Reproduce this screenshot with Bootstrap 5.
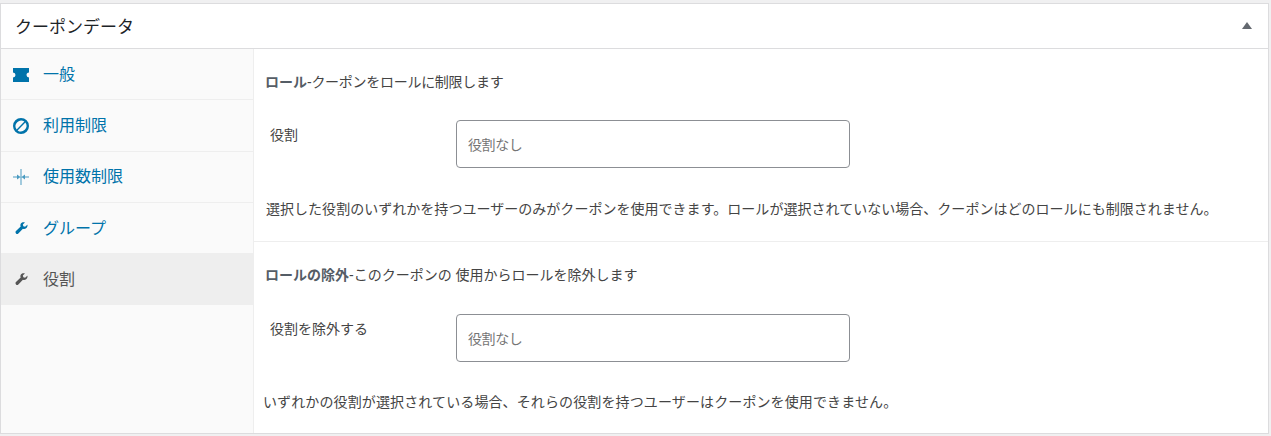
<!DOCTYPE html>
<html lang="ja">
<head>
<meta charset="utf-8">
<title>クーポンデータ</title>
<link rel="stylesheet" href="https://cdn.jsdelivr.net/npm/bootstrap@5.3.0/dist/css/bootstrap.min.css">
<style>
html,body{height:436px;overflow:hidden}
body{background:#f0f0f1;font-family:"Liberation Sans","Noto Sans CJK JP",sans-serif;font-size:14px;color:#444;padding:3px 2px 2px 0}
.metabox{background:#fff;border:1px solid #dcdcde;height:431px;width:1269px;border-radius:0}
.metahead{height:45px;border-bottom:1px solid #dcdcde;padding:3px 14px 0;font-size:17px;color:#1d2327}
.caret-up{width:0;height:0;border-left:5px solid transparent;border-right:5px solid transparent;border-bottom:7px solid #646970;margin:-4px 2px 0 0}
.sidetabs{width:253px;background:#fafafa;border-right:1px solid #eee;flex:none}
.sidetab{height:51px;padding:1px 11px 0;color:#0073aa;font-size:16px;border-bottom:1px solid #eee;text-decoration:none;margin-right:-1px}
.sidetab:hover{color:#0073aa}
.tall-row{height:52px}
.flat-row{padding-top:0}
.short-row{height:50px;border-bottom:0}
.ico-box{width:18px;margin-right:13px;flex:none;display:flex;justify-content:center}
.ico-box svg{fill:currentColor;flex:none}
.sidetab.sel{background:#eee;color:#555;border-bottom:0;height:52px}
.pane-a{height:193px;border-bottom:1px solid #eee}
.pane-b{flex:1}
.pane-h{padding:0 11px;height:24px;line-height:24px}
.pane-h b{color:#555d66}
.tight{letter-spacing:-.28px}
.field-row{padding-left:16px}
.field-lbl{width:186px;flex:none;line-height:20px;padding-top:5px}
.role-in{width:394px;height:48px;border:1px solid #8c8f94;border-radius:4px;padding:2px 11px 0;color:#757575;font-size:14px;background:#fff;letter-spacing:-.4px}
.help-t{line-height:24px}
.pane-a .pane-h{margin-top:21px}
.pane-b .pane-h{margin-top:21px}
.pane-a .field-row{margin-top:26px}
.pane-b .field-row{margin-top:27px}
.pane-a .help-t{margin-top:29px;padding-left:12px;letter-spacing:.03px}
.pane-b .help-t{margin-top:28px;padding-left:9px;letter-spacing:.12px}
</style>
</head>
<body>
<div class="metabox d-flex flex-column">
  <div class="metahead d-flex align-items-center justify-content-between">
    <span>クーポンデータ</span>
    <span class="caret-up"></span>
  </div>
  <div class="d-flex flex-grow-1">
    <nav class="sidetabs">
      <a class="sidetab d-flex align-items-center" href="#"><span class="ico-box"><svg width="18" height="18" viewBox="0 0 18 18"><path d="M1 2h16v4.500a2.500 2.500 0 0 0 0 5V16H1v-4.500a2.500 2.500 0 0 0 0-5z"/></svg></span><span>一般</span></a>
      <a class="sidetab tall-row d-flex align-items-center" href="#"><span class="ico-box"><svg width="18" height="18" viewBox="0 0 18 18"><path fill-rule="evenodd" d="M9 1a8 8 0 1 1 0 16A8 8 0 0 1 9 1zm3.400 3.600A5.600 5.600 0 0 0 4.600 12.400zM5.600 13.400a5.600 5.600 0 0 0 7.800-7.800z"/></svg></span><span>利用制限</span></a>
      <a class="sidetab flat-row d-flex align-items-center" href="#"><span class="ico-box"><svg width="18" height="18" viewBox="0 0 18 18" opacity=".7"><path d="M8.500 1h1v16h-1zM1 8.500h4V6.500L8.500 9 5 11.500V9.500H1zM17 8.500h-4V6.500L9.500 9l3.500 2.500V9.500H17z"/></svg></span><span>使用数制限</span></a>
      <a class="sidetab short-row d-flex align-items-center" href="#"><span class="ico-box"><svg width="15" height="15" viewBox="0 0 18 18"><path d="M16 4.500l-2.700 2.500-2.100-.6-.6-2.100L13.100 1.800C11.300 1 9.300 1.600 8.300 3.100c-.8 1.100-.8 2.500-.3 3.600L2.400 12.100c-.9.900-.7 2.100 0 2.800.8.800 2 .8 2.800 0l5.500-5.500c1.300.5 2.700.3 3.800-.6 1.500-1.200 2.100-3 1.500-4.800z"/></svg></span><span>グループ</span></a>
      <a class="sidetab sel d-flex align-items-center" href="#"><span class="ico-box"><svg width="15" height="15" viewBox="0 0 18 18"><path d="M16 4.500l-2.700 2.500-2.100-.6-.6-2.100L13.100 1.800C11.300 1 9.300 1.600 8.300 3.100c-.8 1.100-.8 2.500-.3 3.600L2.400 12.100c-.9.900-.7 2.100 0 2.800.8.800 2 .8 2.800 0l5.500-5.500c1.300.5 2.700.3 3.800-.6 1.500-1.200 2.100-3 1.500-4.800z"/></svg></span><span>役割</span></a>
    </nav>
    <main class="flex-grow-1 d-flex flex-column">
      <section class="pane-a">
        <div class="pane-h"><b>ロール</b><span class="tight">-クーポンをロールに制限します</span></div>
        <div class="field-row d-flex">
          <div class="field-lbl">役割</div>
          <div class="role-in d-flex align-items-center">役割なし</div>
        </div>
        <div class="help-t">選択した役割のいずれかを持つユーザーのみがクーポンを使用できます。ロールが選択されていない場合、クーポンはどのロールにも制限されません。</div>
      </section>
      <section class="pane-b">
        <div class="pane-h"><b>ロールの除外</b>-このクーポンの 使用からロールを除外します</div>
        <div class="field-row d-flex">
          <div class="field-lbl">役割を除外する</div>
          <div class="role-in d-flex align-items-center">役割なし</div>
        </div>
        <div class="help-t">いずれかの役割が選択されている場合、それらの役割を持つユーザーはクーポンを使用できません。</div>
      </section>
    </main>
  </div>
</div>
</body>
</html>
